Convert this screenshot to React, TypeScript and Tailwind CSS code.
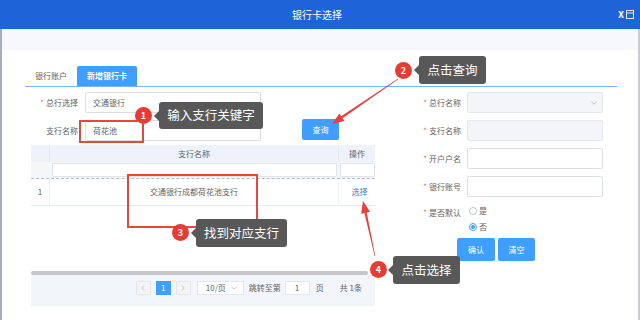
import React from "react";

function arrowPoints(x1: number, y1: number, x2: number, y2: number, headLen = 12, headW = 4.5, tailW = 0.6, shaftW = 2.4) {
  const dx = x2 - x1;
  const dy = y2 - y1;
  const len = Math.sqrt(dx * dx + dy * dy);
  const ux = dx / len;
  const uy = dy / len;
  const nx = -uy;
  const ny = ux;
  const bx = x2 - ux * headLen;
  const by = y2 - uy * headLen;
  const p = (x: number, y: number) => `${x.toFixed(1)},${y.toFixed(1)}`;
  return [
    p(x1 + (nx * tailW) / 2, y1 + (ny * tailW) / 2),
    p(bx + (nx * shaftW) / 2, by + (ny * shaftW) / 2),
    p(bx + nx * headW, by + ny * headW),
    p(x2, y2),
    p(bx - nx * headW, by - ny * headW),
    p(bx - (nx * shaftW) / 2, by - (ny * shaftW) / 2),
    p(x1 - (nx * tailW) / 2, y1 - (ny * tailW) / 2),
  ].join(" ");
}

function Star() {
  return <span className="text-[#f56c6c] mr-[2px] text-[8px]">*</span>;
}

function Chevron() {
  return (
    <svg width="6" height="4" viewBox="0 0 6 4" className="shrink-0">
      <path d="M0.5 0.8 L3 3.2 L5.5 0.8" fill="none" stroke="#b4b8c0" strokeWidth="0.8" />
    </svg>
  );
}

function Badge({ n, cls }: { n: string; cls: string }) {
  return (
    <div className={`absolute w-[17px] h-[17px] rounded-full bg-[#e63c33] text-white text-[9px] font-bold flex items-center justify-center leading-none ${cls}`}>
      {n}
    </div>
  );
}

function Tip({ text, cls }: { text: string; cls: string }) {
  return (
    <div className={`absolute h-[27px] rounded-[3px] bg-[#585858] text-white text-[12.5px] leading-none flex items-center justify-center ${cls}`}>
      <div className="absolute left-[-5px] top-[9px] w-0 h-0 border-y-[5px] border-y-transparent border-r-[5px] border-r-[#585858]" />
      {text}
    </div>
  );
}

export default function App() {
  return (
    <div className="relative w-[640px] h-[320px] overflow-hidden bg-white flex flex-col [font-family:'Noto_Sans_CJK_SC','Noto_Sans',sans-serif]">
      {/* header */}
      <div className="h-[29px] shrink-0 bg-[#1f63d9] flex items-center">
        <div className="flex-1" />
        <div className="text-white text-[10px] leading-none">银行卡选择</div>
        <div className="flex-1 flex justify-end items-center pr-[6px] gap-[2px]">
          <span className="text-white text-[9px] font-bold leading-none">X</span>
          <svg width="8" height="9" viewBox="0 0 8 9">
            <rect x="0.5" y="0.5" width="7" height="8" fill="none" stroke="#dfe8fb" strokeWidth="1" />
            <line x1="0.5" y1="3" x2="7.5" y2="3" stroke="#dfe8fb" strokeWidth="1" />
          </svg>
        </div>
      </div>

      {/* body */}
      <div className="flex-1 flex flex-col border-l-2 border-r-2 border-l-[#a7aebb] border-r-[#c9ccd2]">
        <div className="h-[21px] bg-[#f6f8fc] shrink-0" />
        <div className="pl-[23px] pt-[16px]">
          {/* tabs */}
          <div className="w-[592px] h-[21px] flex items-end border-b border-[#80b2ef]">
            <div className="w-[52px] h-[20px] flex items-center justify-center text-[8px] text-[#606266]">银行账户</div>
            <div className="w-[60px] h-[20px] bg-[#409eff] rounded-t-[2px] flex items-center justify-center text-[8px] text-white font-bold">新增银行卡</div>
          </div>

          <div className="flex">
            {/* left column */}
            <div className="w-[375px] pt-[5px] flex flex-col">
              <div className="flex items-center h-[21px] gap-[6px]">
                <div className="w-[54px] flex justify-end items-center text-[8px] text-[#606266] pr-[1px]">
                  <Star />总行选择
                </div>
                <div className="w-[176px] h-[21px] border border-[#dcdfe6] rounded-[2px] bg-white flex items-center justify-between pl-[7px] pr-[5px] text-[8px] text-[#606266]">
                  <span>交通银行</span>
                  <Chevron />
                </div>
              </div>
              <div className="flex items-center h-[21px] gap-[6px] mt-[7px]">
                <div className="w-[54px] flex justify-end items-center text-[8px] text-[#606266] pr-[1px]">支行名称</div>
                <div className="w-[176px] h-[21px] border border-[#dcdfe6] rounded-[2px] bg-white flex items-center pl-[7px] text-[8px] text-[#606266]">荷花池</div>
                <div className="ml-[35px] w-[37px] h-[21px] -mt-[2px] bg-[#409eff] rounded-[2px] text-white text-[8px] flex items-center justify-center">查询</div>
              </div>

              {/* table */}
              <div className="ml-[6px] w-[344px] mt-[4px] flex flex-col">
                <div className="h-[17px] flex bg-[#eef2f9] text-[8px] text-[#606266]">
                  <div className="w-[19px] border-r border-[#e3e8f0]" />
                  <div className="w-[289px] border-r border-[#e3e8f0] flex items-center justify-center">支行名称</div>
                  <div className="flex-1 flex items-center justify-center">操作</div>
                </div>
                <div className="h-[17px] flex bg-[#f5f6f8] border-b border-dashed border-[#b8bcc4] items-center">
                  <div className="w-[19px]" />
                  <div className="w-[289px] px-[2px]">
                    <div className="h-[14px] bg-white border border-[#e0e4ea] rounded-[1px]" />
                  </div>
                  <div className="flex-1 pl-[1px]">
                    <div className="h-[14px] bg-white border border-[#e0e4ea] rounded-[1px]" />
                  </div>
                </div>
                <div className="h-[27px] flex border-b border-[#e6ebf5] text-[8px] text-[#606266]">
                  <div className="w-[19px] border-r border-[#eef1f6] flex items-center justify-center">1</div>
                  <div className="w-[289px] border-r border-[#eef1f6] flex items-center justify-center">交通银行成都荷花池支行</div>
                  <div className="flex-1 flex items-center justify-center pl-[5px] text-[#2d7ff0]">选择</div>
                </div>
                <div className="h-[65px]" />
                <div className="h-[4px] w-[337px] bg-[#c6c6c6] rounded-[2px]" />
                <div className="h-[31px] bg-[#f2f5fa] flex justify-end items-start pt-[6px] pr-[13px] text-[8px] text-[#606266]">
                  <div className="w-[15px] h-[14px] bg-[#f4f4f5] border border-[#e4e7ed] flex items-center justify-center text-[#c0c4cc]">
                    <svg width="4" height="6" viewBox="0 0 4 6"><path d="M3.2 0.5 L0.8 3 L3.2 5.5" fill="none" stroke="#b8bcc4" strokeWidth="0.8" /></svg>
                  </div>
                  <div className="ml-[5px] w-[15px] h-[14px] bg-[#409eff] text-white flex items-center justify-center">1</div>
                  <div className="ml-[5px] w-[15px] h-[14px] bg-[#f4f4f5] border border-[#e4e7ed] flex items-center justify-center">
                    <svg width="4" height="6" viewBox="0 0 4 6"><path d="M0.8 0.5 L3.2 3 L0.8 5.5" fill="none" stroke="#b8bcc4" strokeWidth="0.8" /></svg>
                  </div>
                  <div className="ml-[6px] w-[47px] h-[14px] bg-white border border-[#e4e7ed] flex items-center justify-between pl-[8px] pr-[6px]">
                    <span>10/页</span>
                    <Chevron />
                  </div>
                  <div className="ml-[5px] h-[14px] flex items-center">跳转至第</div>
                  <div className="ml-[4px] w-[25px] h-[14px] bg-white border border-[#e4e7ed] flex items-center pl-[9px]">1</div>
                  <div className="ml-[6px] h-[14px] flex items-center">页</div>
                  <div className="ml-[16px] h-[14px] flex items-center">共 1条</div>
                </div>
              </div>
            </div>

            {/* right column */}
            <div className="flex-1 pt-[5px] flex flex-col">
              <div className="flex items-center h-[21px] gap-[6px]">
                <div className="w-[61px] flex justify-end items-center text-[8px] text-[#606266]"><Star />总行名称</div>
                <div className="w-[136px] h-[21px] bg-[#f3f5f8] border border-[#e4e7ed] rounded-[2px] flex items-center justify-end pr-[5px]"><Chevron /></div>
              </div>
              <div className="flex items-center h-[21px] gap-[6px] mt-[7px]">
                <div className="w-[61px] flex justify-end items-center text-[8px] text-[#606266]"><Star />支行名称</div>
                <div className="w-[136px] h-[21px] bg-[#f3f5f8] border border-[#e4e7ed] rounded-[2px]" />
              </div>
              <div className="flex items-center h-[21px] gap-[6px] mt-[7px]">
                <div className="w-[61px] flex justify-end items-center text-[8px] text-[#606266]"><Star />开户户名</div>
                <div className="w-[136px] h-[21px] bg-white border border-[#dcdfe6] rounded-[2px]" />
              </div>
              <div className="flex items-center h-[21px] gap-[6px] mt-[7px]">
                <div className="w-[61px] flex justify-end items-center text-[8px] text-[#606266]"><Star />银行账号</div>
                <div className="w-[136px] h-[21px] bg-white border border-[#dcdfe6] rounded-[2px]" />
              </div>
              <div className="flex gap-[8px] mt-[6px]">
                <div className="w-[61px] h-[16px] pt-[4px] flex justify-end items-center text-[8px] text-[#606266]"><Star />是否默认</div>
                <div className="flex flex-col text-[8px] text-[#606266]">
                  <div className="h-[16px] flex items-center gap-[2px]">
                    <div className="w-[8px] h-[8px] rounded-full border border-[#c0c4cc] bg-white" />
                    <span>是</span>
                  </div>
                  <div className="h-[16px] flex items-center gap-[2px]">
                    <div className="w-[8px] h-[8px] rounded-full border border-[#409eff] bg-white flex items-center justify-center">
                      <div className="w-[4px] h-[4px] rounded-full bg-[#409eff]" />
                    </div>
                    <span>否</span>
                  </div>
                </div>
              </div>
              <div className="flex gap-[3px] mt-[3px] ml-[57px]">
                <div className="w-[38px] h-[23px] bg-[#409eff] rounded-[2px] text-white text-[8px] flex items-center justify-center">确认</div>
                <div className="w-[37px] h-[23px] bg-[#409eff] rounded-[2px] text-white text-[8px] flex items-center justify-center">清空</div>
              </div>
            </div>
          </div>
        </div>
      </div>

      {/* annotations */}
      <div className="absolute left-[79px] top-[120px] w-[65px] h-[23px] border-2 border-[#e8463d]" />
      <div className="absolute left-[127px] top-[174px] w-[131px] h-[54px] border-2 border-[#e8463d]" />
      <svg className="absolute left-0 top-0 pointer-events-none" width="640" height="320">
        <polygon points={arrowPoints(398, 79, 332, 124)} fill="#e8403a" />
        <polygon points={arrowPoints(375, 256, 363, 201)} fill="#e8403a" />
      </svg>
      <Badge n="1" cls="left-[135px] top-[107px]" />
      <Tip text="输入支行关键字" cls="left-[159px] top-[102px] w-[104px]" />
      <Badge n="2" cls="left-[395px] top-[62px]" />
      <Tip text="点击查询" cls="left-[419px] top-[56px] w-[67px] h-[28px]" />
      <Badge n="3" cls="left-[172px] top-[224px]" />
      <Tip text="找到对应支行" cls="left-[196px] top-[219px] w-[91px] h-[28px]" />
      <Badge n="4" cls="left-[370px] top-[261px]" />
      <Tip text="点击选择" cls="left-[393px] top-[256px] w-[67px] h-[28px]" />
    </div>
  );
}
